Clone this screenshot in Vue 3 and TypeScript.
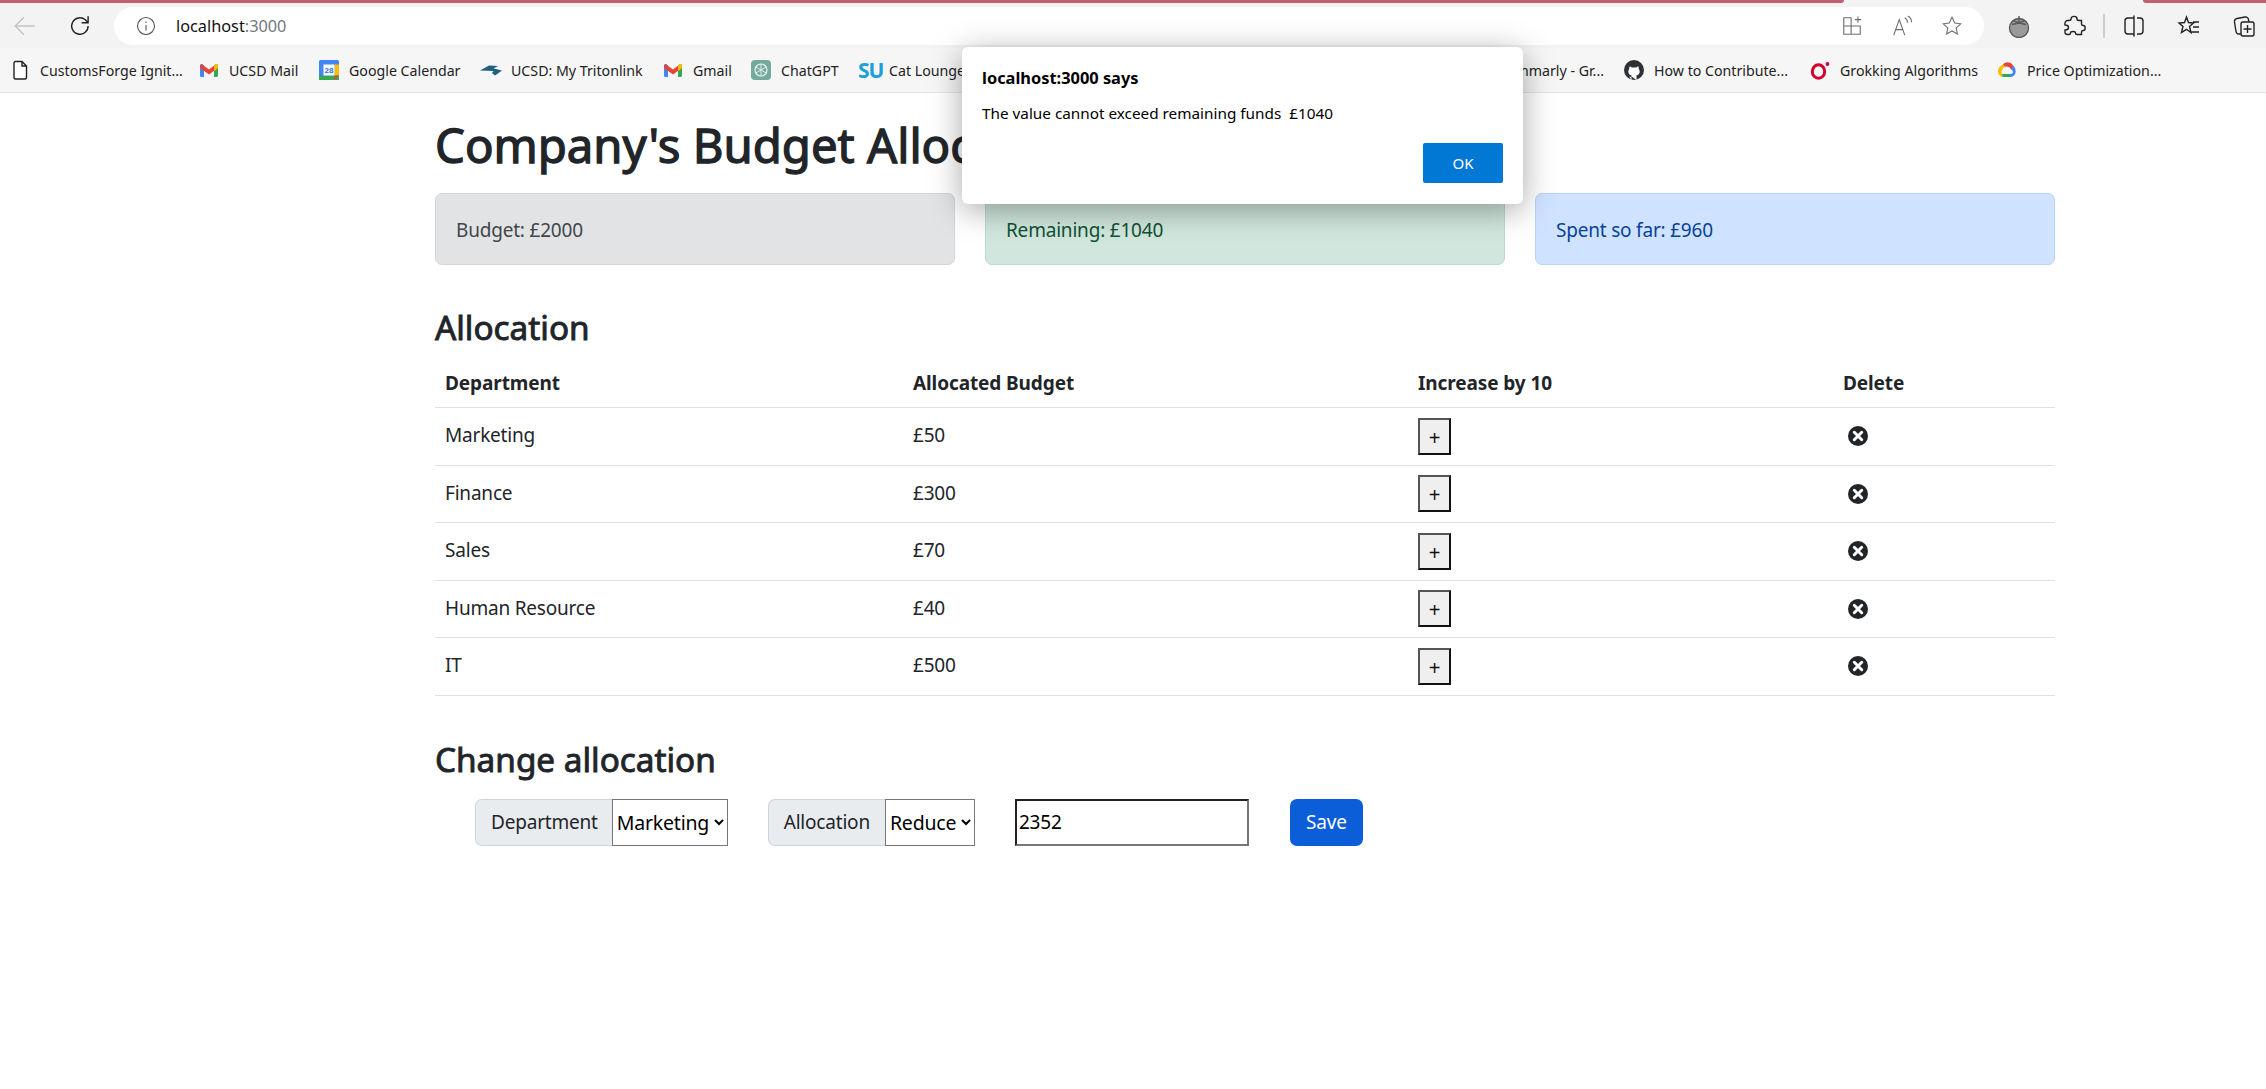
<script setup lang="ts">
interface Row { name: string; amount: number }

const rows: Row[] = [
  { name: 'Marketing', amount: 50 },
  { name: 'Finance', amount: 300 },
  { name: 'Sales', amount: 70 },
  { name: 'Human Resource', amount: 40 },
  { name: 'IT', amount: 500 },
]

const bookmarks = [
  { label: 'CustomsForge Ignit...', icon: 'page', width: 189 },
  { label: 'UCSD Mail', icon: 'gmail', width: 120 },
  { label: 'Google Calendar', icon: 'cal', width: 161 },
  { label: 'UCSD: My Tritonlink', icon: 'tri', width: 183 },
  { label: 'Gmail', icon: 'gmail', width: 88 },
  { label: 'ChatGPT', icon: 'gpt', width: 107 },
  { label: 'Cat Lounge', icon: 'su', width: 120 },
]
const bookmarksRight = [
  { label: 'How to Contribute...', icon: 'gh', width: 186 },
  { label: 'Grokking Algorithms', icon: 'o', width: 187 },
  { label: 'Price Optimization...', icon: 'gcp', width: 269 },
]
</script>

<template>
  <div class="page">
    <div class="accent">
      <div class="accent-left"></div>
      <div class="accent-right"></div>
    </div>

    <header class="toolbar">
      <svg class="nav-icon back" viewBox="0 0 24 24"><path d="M21 12H3M11 4l-8 8 8 8" /></svg>
      <svg class="nav-icon reload" viewBox="0 0 24 24"><path d="M19.500 12a7.600 7.600 0 1 1-2.600-5.700L19.500 9M19.500 3v6h-6" /></svg>
      <div class="omnibox">
        <svg class="info" viewBox="0 0 20 20"><circle cx="10" cy="10" r="8.500" /><path d="M10 9v5.500M10 5.600v1.400" /></svg>
        <span class="host">localhost<span class="port">:3000</span></span>
        <div class="omni-actions">
          <svg viewBox="0 0 24 24"><path d="M3 3h8v18H3zM3 12h18v9H11M15 5h7M18.500 1.500v7" /></svg>
          <svg viewBox="0 0 24 24"><path d="M3 22 9 5l6 17M5 16h8M15 3c2 1 3 3 3 5.500M18.500 1c2.500 1.500 4 4 4 7" /></svg>
          <svg viewBox="0 0 24 24"><path d="m12 2.500 2.900 6.300 6.600.8-4.900 4.500 1.300 6.600-5.900-3.300-5.900 3.300 1.300-6.600-4.900-4.500 6.600-.8z" /></svg>
        </div>
      </div>
      <div class="tools">
        <svg class="tool tomato" viewBox="0 0 24 24">
          <circle cx="12" cy="14" r="9.500" />
          <path d="M12 2v7M6 6.500l6 2.500 6-2.500M5 10.500 12 9l7 1.500" />
        </svg>
        <svg class="tool" viewBox="0 0 24 24"><path d="M9 5c0-3.500 6-3.500 6 0 0 1 1 1.500 2 1.500h2.500V10c0 1 1 1.500 1.800 1.500 2.500 0 2.500 5 0 5-.8 0-1.800.5-1.800 1.500v2.500H15c-1 0-1.500-1-1.500-1.500 0-2-5-2-5 0 0 .5-.5 1.500-1.500 1.500H5.500c-1.500 0-2.500-1-2.500-2.500V16c2.500 0 3.500-1.500 3.500-2.500S5.500 11 3 11c-.5-2 .5-4.500 2.500-4.500H7C8 6.500 9 6 9 5z" /></svg>
        <span class="divider"></span>
        <svg class="tool" viewBox="0 0 24 24"><path d="M12 1.500v21M12 4H6a3 3 0 0 0-3 3v10a3 3 0 0 0 3 3h6M15 4h3a3 3 0 0 1 3 3v10a3 3 0 0 1-3 3h-3" /></svg>
        <svg class="tool" viewBox="0 0 24 24"><path d="m9.500 3 2 5.500 5 .5-4 3.500 1.500 6-4.500-3.200-5 3.200 1.500-6-4-3.500 5.500-.5zM16 8h6M16 13h6M14.500 18H22" /></svg>
        <svg class="tool" viewBox="0 0 24 24"><path d="M8.500 20H7a3 3 0 0 1-3-2.500L2.500 8a3 3 0 0 1 2.500-3.500L13 3a3 3 0 0 1 3.500 2.500l.2 2M11 8h9a2 2 0 0 1 2 2v10a2 2 0 0 1-2 2h-9a2 2 0 0 1-2-2V10a2 2 0 0 1 2-2zM15.500 11v8M11.500 15h8" /></svg>
      </div>
    </header>

    <nav class="bookmarks">
      <div class="mark-group">
        <div v-for="b in bookmarks" :key="b.label" class="mark" :style="{ width: b.width + 'px' }">
          <svg v-if="b.icon === 'page'" class="mark-icon" viewBox="0 0 20 20">
            <path d="M4 3a1.500 1.500 0 0 1 1.500-1.500H12L16.500 6v11.500A1.500 1.500 0 0 1 15 19H5.500A1.500 1.500 0 0 1 4 17.500zM12 1.500V6h4.500" fill="#fff" stroke="#222" stroke-width="1.400" />
          </svg>
          <svg v-else-if="b.icon === 'gmail'" class="mark-icon" viewBox="0 0 20 20">
            <path d="M1 5.500c0-1.500 1.500-2 2.500-1.200L5 5.500V17H2.500A1.500 1.500 0 0 1 1 15.500z" fill="#4285f4" />
            <path d="M19 5.500c0-1.500-1.500-2-2.500-1.200L15 5.500V17h2.500a1.500 1.500 0 0 0 1.500-1.500z" fill="#34a853" />
            <path d="M1 5.500l2-1.300L10 9.500l7-5.300 2 1.300V8l-9 6.500L1 8z" fill="#ea4335" />
            <path d="M15 5.500 16.500 4.300c1-.8 2.500-.3 2.500 1.200V8l-4 3z" fill="#fbbc04" />
          </svg>
          <svg v-else-if="b.icon === 'cal'" class="mark-icon" viewBox="0 0 20 20">
            <rect x="0" y="0" width="20" height="20" rx="1.500" fill="#4285f4" />
            <rect x="0" y="15.500" width="20" height="4.500" rx="1" fill="#34a853" />
            <rect x="15.500" y="4.500" width="4.500" height="11" fill="#fbbc04" />
            <rect x="4.500" y="4.500" width="11" height="11" fill="#fff" />
            <path d="M15.500 20 20 15.500h-4.500z" fill="#ea4335" />
            <text x="10" y="13.300" font-size="8" font-weight="700" text-anchor="middle" fill="#1a73e8" font-family="Liberation Sans, sans-serif">28</text>
          </svg>
          <svg v-else-if="b.icon === 'tri'" class="mark-icon wide" viewBox="0 0 22 20">
            <path d="M0 10.500 9 5.500l9 .5-4.500 2.500 8.500 2-7 5-3-2.500 1.500-2z" fill="#1f5f82" />
          </svg>
          <svg v-else-if="b.icon === 'gpt'" class="mark-icon" viewBox="0 0 20 20">
            <rect width="20" height="20" rx="4" fill="#74aa9c" />
            <circle cx="10" cy="10" r="6" fill="none" stroke="#e9f3f0" stroke-width="1.200" />
            <path d="M10 4v12M4.800 7l10.400 6M15.200 7 4.800 13" stroke="#e9f3f0" stroke-width=".9" />
          </svg>
          <span v-else class="su">SU</span>
          <span class="mark-text">{{ b.label }}</span>
        </div>
      </div>
      <div class="mark-group right">
        <span class="mark-text cut">Grammarly - Gr...</span>
        <div v-for="b in bookmarksRight" :key="b.label" class="mark" :style="{ width: b.width + 'px' }">
          <svg v-if="b.icon === 'gh'" class="mark-icon" viewBox="0 0 20 20">
            <circle cx="10" cy="10" r="10" fill="#2b3137" />
            <path d="M7.500 20v-3.200c-2 .4-3-.8-3.500-2M12.500 20v-4.500c1.800-.4 3.200-1.500 3.200-4 0-1-.4-1.900-1-2.500.2-.9.100-1.900-.3-2.600-.9 0-1.700.5-2.200 1H7.800c-.5-.5-1.300-1-2.200-1-.4.700-.5 1.700-.3 2.600-.6.600-1 1.500-1 2.500 0 2.500 1.400 3.600 3.200 4v1" fill="#fff" />
          </svg>
          <svg v-else-if="b.icon === 'o'" class="mark-icon" viewBox="0 0 20 20">
            <ellipse cx="8.500" cy="11.500" rx="6.200" ry="6.800" fill="none" stroke="#d3002d" stroke-width="3" />
            <circle cx="17.500" cy="4" r="1.900" fill="#d3002d" />
          </svg>
          <svg v-else class="mark-icon" viewBox="0 0 20 20">
            <path d="M6 4.500C9 1 14 2 16 5.500l1 2.500-3 1.500C13 7 10 6 8 7z" fill="#ea4335" />
            <path d="M16 5.500c4.500 4 3 11.500-2.500 11.500H12v-3h2c2.500-.5 2.500-3.500 0-4.500z" fill="#4285f4" />
            <path d="M13 17H5.500l-.5-3h8z" fill="#34a853" />
            <path d="M6 4.500 8 7C5 8 4 12 5 14v3C-1 14 0 7 6 4.500z" fill="#fbbc04" />
          </svg>
          <span class="mark-text">{{ b.label }}</span>
        </div>
      </div>
    </nav>

    <main class="content">
      <h1 class="title">Company's Budget Allocation</h1>

      <div class="alerts">
        <div class="alert grey">Budget: £2000</div>
        <div class="alert green">Remaining: £1040</div>
        <div class="alert blue">Spent so far: £960</div>
      </div>

      <h3 class="section first">Allocation</h3>
      <table class="table">
        <thead>
          <tr>
            <th class="c1">Department</th>
            <th class="c2">Allocated Budget</th>
            <th class="c3">Increase by 10</th>
            <th>Delete</th>
          </tr>
        </thead>
        <tbody>
          <tr v-for="r in rows" :key="r.name">
            <td>{{ r.name }}</td>
            <td>£{{ r.amount }}</td>
            <td><button class="plus">+</button></td>
            <td>
              <svg class="del" viewBox="0 0 20 20">
                <circle cx="10" cy="10" r="10" fill="#212529" />
                <path d="m6.300 6.300 7.400 7.400M13.700 6.300l-7.400 7.400" stroke="#fff" stroke-width="3" stroke-linecap="round" />
              </svg>
            </td>
          </tr>
        </tbody>
      </table>

      <h3 class="section second">Change allocation</h3>
      <div class="form-row">
        <div class="group">
          <label class="addon dept-label">Department</label>
          <select class="pick dept"><option>Marketing</option></select>
        </div>
        <div class="group">
          <label class="addon">Allocation</label>
          <select class="pick alloc"><option>Reduce</option></select>
        </div>
        <input class="amount" value="2352" />
        <button class="save">Save</button>
      </div>
    </main>

    <div class="dialog">
      <div class="dialog-title">localhost:3000 says</div>
      <div class="dialog-msg">The value cannot exceed remaining funds&nbsp; £1040</div>
      <div class="dialog-foot"><button class="ok">OK</button></div>
    </div>
  </div>
</template>

<style scoped>
.page {
  position: relative;
  width: 2266px;
  height: 1089px;
  overflow: hidden;
  background: #fff;
  color: #212529;
  font-family: "Noto Sans", sans-serif;
}
.accent {
  display: flex;
  justify-content: space-between;
  height: 3px;
  background: #f3f3f3;
}
.accent-left { width: 1844px; background: #c2606e; border-radius: 0 0 4px 0; }
.accent-right { width: 123px; background: #c2606e; border-radius: 0 0 0 4px; }
.toolbar {
  display: flex;
  align-items: center;
  height: 45px;
  padding-left: 12px;
  background: #f3f3f3;
  box-sizing: border-box;
}
.nav-icon { width: 26px; height: 26px; flex: none; fill: none; stroke-width: 1.300; }
.back { stroke: #c4c4c4; }
.reload { stroke: #222; margin-left: 29px; }
.omnibox {
  display: flex;
  align-items: center;
  flex: none;
  width: 1870px;
  height: 38px;
  margin-left: 21px;
  padding-left: 22px;
  box-sizing: border-box;
  background: #fff;
  border-radius: 19px;
}
.info { width: 20px; height: 20px; fill: none; stroke: #555; stroke-width: 1.100; }
.host { margin-left: 20px; font-size: 16.300px; color: #111; }
.port { color: #71777e; }
.omni-actions { display: flex; gap: 28px; margin-left: auto; margin-right: 21px; }
.omni-actions svg { width: 22px; height: 22px; fill: none; stroke: #6d6d6d; stroke-width: 1.200; }
.tools { display: flex; align-items: center; gap: 31px; margin-left: 23px; }
.tool { width: 24px; height: 24px; flex: none; fill: none; stroke: #222; stroke-width: 1.400; }
.tomato { fill: #9a9a9a; stroke: #5a5a5a; }
.divider { width: 2px; height: 24px; background: #cfcfcf; margin: 0 -14px; }
.bookmarks {
  display: flex;
  align-items: center;
  justify-content: space-between;
  height: 45px;
  padding-left: 10px;
  background: #f6f6f6;
  border-bottom: 1px solid #e5e5e5;
  box-sizing: border-box;
}
.mark-group { display: flex; align-items: center; }
.mark { display: flex; align-items: center; gap: 10px; flex: none; }
.mark-icon { width: 20px; height: 20px; flex: none; }
.mark-icon.wide { width: 22px; margin-right: -1px; }
.mark-text { font-size: 14.200px; color: #222; white-space: nowrap; }
.cut { margin-right: 20px; }
.su { width: 21px; font-size: 21px; font-weight: 700; color: #1ba0d8; line-height: 20px; letter-spacing: -1px; }
.content { width: 1620px; margin-left: 435px; }
/* Noto Sans has no medium cut here, a thin stroke stands in for it */
.title {
  margin: 22px 0 0;
  font-size: 47.300px;
  font-weight: 400;
  -webkit-text-stroke: 1.300px #212529;
  line-height: 60px;
  white-space: nowrap;
}
.alerts { display: flex; gap: 30px; margin-top: 18px; }
.alert {
  flex: 1;
  height: 72px;
  padding: 2px 20px 0;
  display: flex;
  align-items: center;
  font-size: 19px;
  letter-spacing: -0.2px;
  border: 1px solid;
  border-radius: 7px;
  box-sizing: border-box;
}
.grey { background: #e2e3e5; border-color: #d3d6d8; color: #41464b; }
.green { background: #d1e7dd; border-color: #badbcc; color: #0f5132; }
.blue { background: #cfe2ff; border-color: #b6d4fe; color: #084298; }
.section {
  margin: 0;
  font-size: 33.300px;
  font-weight: 400;
  -webkit-text-stroke: 0.9px #212529;
  line-height: 42px;
}
.first { margin-top: 41px; }
.second { margin-top: 42px; }
.table {
  width: 100%;
  margin-top: 11px;
  border-collapse: collapse;
  table-layout: fixed;
  font-size: 19px;
  letter-spacing: -0.2px;
}
.table th { text-align: left; font-weight: 700; padding: 10px; line-height: 28px; border-bottom: 1px solid #dee2e6; letter-spacing: -0.1px; }
.table td { padding: 0 10px 2px; height: 54.500px; border-bottom: 1px solid #dee2e6; }
.c1 { width: 448px; }
.c2 { width: 485px; }
.c3 { width: 405px; }
.plus {
  display: block;
  width: 33px;
  height: 37px;
  margin-top: 2px;
  padding: 3px 0 0;
  font-size: 20px;
  line-height: 1;
  color: #111;
  background: #efefef;
  border: 2px solid;
  border-color: #555 #111 #111 #555;
}
.del { display: block; width: 20px; height: 20px; margin-left: 5px; margin-top: 2px; }
.form-row { display: flex; align-items: center; margin-top: 19px; padding-left: 40px; }
.group { display: flex; margin-right: 40px; }
.addon {
  display: flex;
  align-items: center;
  height: 47px;
  padding: 0 15px;
  font-size: 19px;
  letter-spacing: -0.2px;
  color: #212529;
  background: #e9ecef;
  border: 1px solid #ced4da;
  border-right: 0;
  border-radius: 7px 0 0 7px;
  box-sizing: border-box;
}
.dept-label { padding-right: 14px; }
.pick {
  height: 47px;
  font-family: inherit;
  font-size: 19.500px;
  letter-spacing: -0.2px;
  color: #000;
  background: #fff;
  border: 1px solid #767676;
  border-radius: 0;
}
.dept { width: 116px; }
.alloc { width: 90px; }
.amount {
  width: 234px;
  height: 47px;
  padding: 0 2px;
  font-family: inherit;
  font-size: 19px;
  letter-spacing: -0.2px;
  color: #000;
  border: 2px solid;
  border-color: #222 #767676 #767676 #222;
  box-sizing: border-box;
}
.save {
  height: 47px;
  width: 73px;
  margin-left: 41px;
  font-family: inherit;
  font-size: 19px;
  letter-spacing: -0.2px;
  color: #fff;
  background: #0b5ed7;
  border: 0;
  border-radius: 7px;
}
.dialog {
  position: absolute;
  left: 962px;
  top: 47px;
  width: 561px;
  height: 157px;
  padding: 20px;
  box-sizing: border-box;
  background: #fff;
  border-radius: 6px;
  box-shadow: 0 6px 32px rgba(0, 0, 0, 0.35);
  color: #000;
}
.dialog-title { font-size: 16.400px; font-weight: 700; line-height: 22px; }
.dialog-msg { font-size: 15.300px; line-height: 20px; margin-top: 14px; }
.dialog-foot { display: flex; justify-content: flex-end; margin-top: 20px; }
.ok {
  width: 80px;
  height: 40px;
  padding: 0;
  font-family: inherit;
  font-size: 15px;
  color: #fff;
  background: #0078d4;
  border: 0;
  border-radius: 2px;
}
</style>

<style>
html, body { margin: 0; background: #fff; }
</style>
